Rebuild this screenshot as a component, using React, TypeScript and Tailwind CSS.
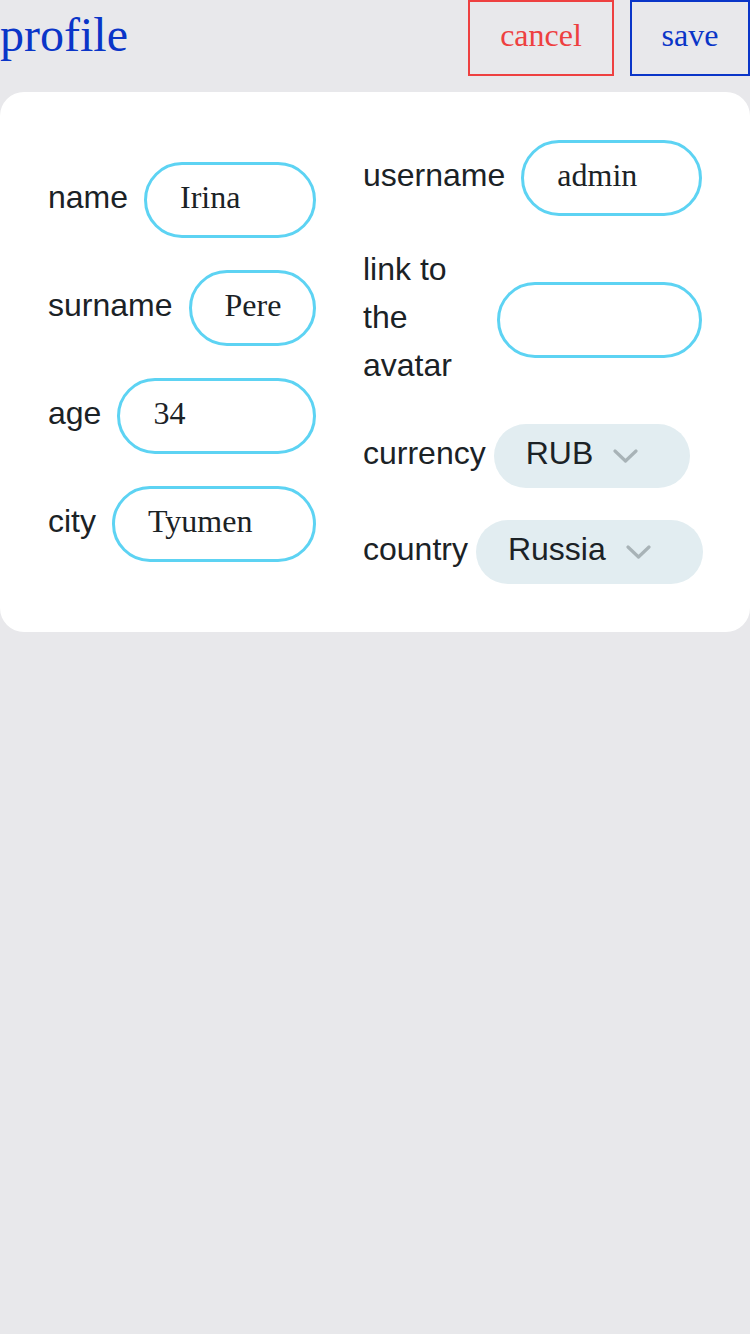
import React from 'react';

const sans = { fontFamily: '"Liberation Sans", Arial, sans-serif' };
const serif = { fontFamily: '"Liberation Serif", "Times New Roman", serif' };

function Field({ label, value }: { label: string; value: string }) {
  return (
    <div className="flex items-center gap-4">
      <span className="text-[32px] pb-[6px] text-[#1b2226] shrink-0" style={sans}>{label}</span>
      <input
        readOnly
        value={value}
        className="h-[76px] flex-1 min-w-0 rounded-full border-[3px] border-[#5dd3f3] bg-white pl-[33px] pr-4 pb-[6px] text-[32px] text-[#1b2226] outline-none"
        style={serif}
      />
    </div>
  );
}

function Chevron() {
  return (
    <svg width="25" height="16" viewBox="0 0 25 16" fill="none" className="shrink-0">
      <polyline points="2,3 12.5,13 23,3" stroke="#a8b3b7" strokeWidth="3.2" strokeLinecap="round" strokeLinejoin="round" />
    </svg>
  );
}

function SelectField({ label, value }: { label: string; value: string }) {
  return (
    <div className="flex items-center gap-2">
      <span className="text-[32px] pb-[6px] text-[#1b2226] shrink-0" style={sans}>{label}</span>
      <div className="h-16 flex items-center gap-5 rounded-full bg-[#e2edf1] pl-8 pr-[52px]">
        <span className="text-[32px] pb-[6px] text-[#1b2226]" style={sans}>{value}</span>
        <Chevron />
      </div>
    </div>
  );
}

export default function App() {
  return (
    <div className="min-h-screen bg-[#e8e8eb]">
      <header className="flex items-center h-[76px]">
        <h1 className="flex-1 pb-[6px] text-[48px] leading-none text-[#0a35c8]" style={serif}>profile</h1>
        <button className="h-[76px] w-[146px] pb-[6px] border-2 border-[#ee4040] text-[32px] text-[#ee4040]" style={serif}>cancel</button>
        <button className="ml-4 h-[76px] w-[120px] pb-[6px] border-2 border-[#0a35c8] text-[32px] text-[#0a35c8]" style={serif}>save</button>
      </header>

      <main className="mt-4 rounded-[24px] bg-white p-12 flex items-center justify-between">
        <div className="w-[268px] flex flex-col gap-8">
          <Field label="name" value="Irina" />
          <Field label="surname" value="Pere" />
          <Field label="age" value="34" />
          <Field label="city" value="Tyumen" />
        </div>

        <div className="w-[339px] flex flex-col gap-8">
          <Field label="username" value="admin" />
          <div className="flex items-center gap-4">
            <span className="w-[118px] shrink-0 -translate-y-[3px] text-[32px] leading-[48px] text-[#1b2226]" style={sans}>link to the avatar</span>
            <input
              readOnly
              value=""
              className="h-[76px] flex-1 min-w-0 rounded-full border-[3px] border-[#5dd3f3] bg-white pl-[33px] text-[32px] outline-none"
              style={serif}
            />
          </div>
          <SelectField label="currency" value="RUB" />
          <SelectField label="country" value="Russia" />
        </div>
      </main>
    </div>
  );
}
